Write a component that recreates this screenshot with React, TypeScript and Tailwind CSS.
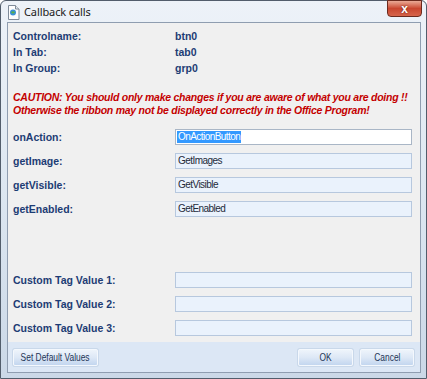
import React from "react";

const labelCls = "text-[10.5px] font-bold text-[#1d3c74] leading-[16px] whitespace-nowrap";
const font = { fontFamily: '"Liberation Sans", Arial, sans-serif' };

function TitleIcon() {
  return (
    <svg width="13" height="15" viewBox="0 0 13 15">
      <path d="M1.5 0.5h7l3.5 3.5v10.5h-10.5z" fill="#fdfdfd" stroke="#7f8b99" />
      <path d="M8.5 0.5v3.5h3.5" fill="#e3e8ee" stroke="#7f8b99" />
      <circle cx="6" cy="7.5" r="3" fill="#3a8fd6" />
      <path d="M4 7.5c1-1.6 3-1.6 4 0c-1 1.3-3 1.3-4 0z" fill="#58b24a" />
    </svg>
  );
}

function Field({ label, value, selected, white }: { label: string; value?: string; selected?: boolean; white?: boolean }) {
  return (
    <div className="flex items-center h-[16px]">
      <div className={`${labelCls} w-[162px]`}>{label}</div>
      <div
        className={`w-[237px] h-[16px] border flex items-center pl-[1px] text-[10px] tracking-[-0.55px] ${
          white ? "bg-white border-[#a9b6c6]" : "bg-[#eaf2fc] border-[#b7c8de]"
        } text-[#1d2a3a]`}
      >
        {value &&
          (selected ? (
            <span className="bg-[#3399ff] text-white leading-[12px] px-[1px]">{value}</span>
          ) : (
            <span className="leading-[12px] px-[1px]">{value}</span>
          ))}
      </div>
    </div>
  );
}

function WinButton({ children, width }: { children: React.ReactNode; width: string }) {
  return (
    <button
      className={`${width} h-[17px] rounded-[2px] border border-[#f4f8fd] bg-gradient-to-b from-[#eef4fb] via-[#dde8f6] to-[#c3d6ef] shadow-[0_0_0_1px_#c9d8ea] flex items-center justify-center`}
    >
      <span className="inline-block whitespace-nowrap text-[10.5px] leading-[15px] text-[#1e3556] scale-x-[0.8]">
        {children}
      </span>
    </button>
  );
}

export default function App() {
  return (
    <div style={font} className="w-[427px] h-[379px] bg-white">
      <div className="relative w-[427px] h-[379px] rounded-t-[6px] border border-[#525d6b] bg-gradient-to-b from-[#edf2f8] via-[#dde7f1] to-[#cbd8e7] pl-[6px] pr-[5px] pb-[5px] flex flex-col">
        {/* Title bar */}
        <div className="h-[21px] shrink-0 flex items-center gap-[3px] pt-[2px]">
          <TitleIcon />
          <span
            className="text-[11px] tracking-[-0.1px] text-[#1a1a1a] ml-[1px]"
            style={{ fontFamily: '"Noto Sans", "Open Sans", sans-serif' }}
          >
            Callback calls
          </span>
        </div>
        <div className="absolute right-[4px] top-[-1px] w-[35px] h-[17px] rounded-b-[4px] border border-[#6b2a1e] bg-gradient-to-b from-[#e9a996] via-[#c9462f] to-[#d6654b] flex items-center justify-center">
          <span className="text-white font-bold text-[12px] leading-none [text-shadow:0_0_2px_#5a1a10]">x</span>
        </div>

        {/* Client area */}
        <div className="flex-1 flex flex-col border border-[#8f9db0] bg-[#f0f0f0]">
          <div className="flex-1 pl-[5px] pt-[5px]">
            <div className="flex">
              <div className={`${labelCls} w-[162px]`}>Controlname:</div>
              <div className={labelCls}>btn0</div>
            </div>
            <div className="flex">
              <div className={`${labelCls} w-[162px]`}>In Tab:</div>
              <div className={labelCls}>tab0</div>
            </div>
            <div className="flex">
              <div className={`${labelCls} w-[162px]`}>In Group:</div>
              <div className={labelCls}>grp0</div>
            </div>

            <div className="mt-[15px] text-[10.5px] tracking-[-0.25px] leading-[13px] font-bold italic text-[#c40000] whitespace-nowrap">
              CAUTION: You should only make changes if you are aware of what you are doing !!
              <br />
              Otherwise the ribbon may not be displayed correctly in the Office Program!
            </div>

            <div className="mt-[12px] flex flex-col gap-[8px]">
              <Field label="onAction:" value="OnActionButton" selected white />
              <Field label="getImage:" value="GetImages" />
              <Field label="getVisible:" value="GetVisible" />
              <Field label="getEnabled:" value="GetEnabled" />
            </div>

            <div className="mt-[55px] flex flex-col gap-[8px]">
              <Field label="Custom Tag Value 1:" />
              <Field label="Custom Tag Value 2:" />
              <Field label="Custom Tag Value 3:" />
            </div>
          </div>

          {/* Footer */}
          <div className="h-[30px] shrink-0 bg-[#dce7f5] flex items-start pt-[7px] pl-[5px] pr-[6px]">
            <WinButton width="w-[85px]">Set Default Values</WinButton>
            <div className="flex-1" />
            <div className="flex gap-[7px]">
              <WinButton width="w-[55px]">OK</WinButton>
              <WinButton width="w-[54px]">Cancel</WinButton>
            </div>
          </div>
        </div>
      </div>
    </div>
  );
}
